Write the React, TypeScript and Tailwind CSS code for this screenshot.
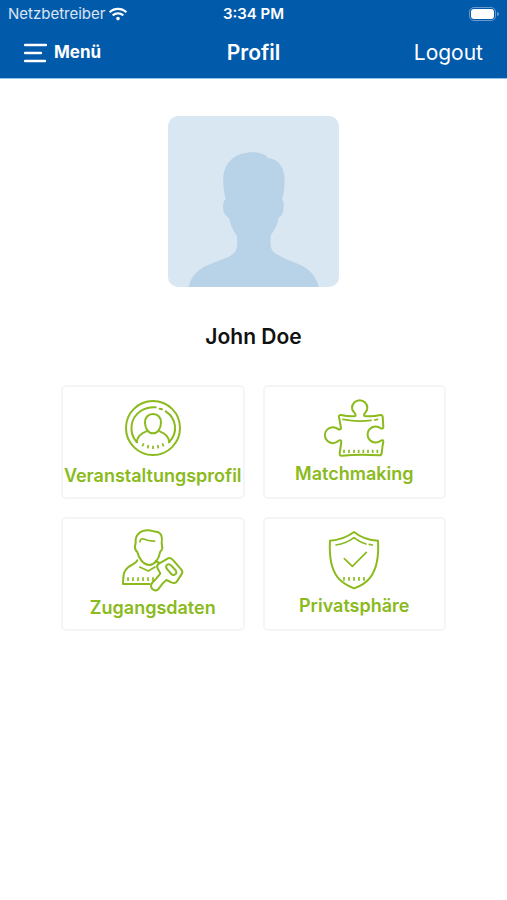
import { FaWifi } from "react-icons/fa";

const iconProps = {
    fill: "none",
    stroke: "currentColor",
    strokeWidth: 6,
    strokeLinecap: "round" as const,
    strokeLinejoin: "round" as const,
    "aria-hidden": true,
};

function EventProfileIcon() {
    return (
        <svg {...iconProps} viewBox="0 0 198 198" className="w-[66px] h-[66px]">
            <circle cx="99" cy="96" r="81" />
            <path d="M51 139C25 111 30 66 62 45C76 36 91 33 107 34M137 46C170 67 175 111 147 139" />
            <path d="M119 38l7 2" />
            <path d="M99 54c-15 0-25 11-24 27 1 17 10 31 24 31s23-14 24-31c1-16-9-27-24-27Z" />
            <path d="M50 138c2-16 12-26 29-32M148 138c-2-16-12-26-29-32" />
            <path strokeLinecap="butt" strokeWidth="5" d="M71 142l-4 9M85 147l-2 10M99 149v10M113 147l2 10M127 142l4 9" />
        </svg>
    );
}

function PuzzleIcon() {
    return (
        <svg {...iconProps} viewBox="0 0 198 192" className="w-[66px] h-16">
            <path d="M103 60C108 52 93 49 93 36a23 23 0 0 1 46 0C139 49 125 52 130 60C146 62 162 61 178 57Q184 56 185 62L187 92Q187 100 179 97A24 24 0 1 0 179 134Q187 130 187 137C184 150 183 162 182 172Q181 178 175 178Q116 174 62 179Q55 179 56 172L61 138Q61 130 53 134A24 24 0 1 1 51 99Q59 103 60 96L54 63Q53 56 60 57C75 60 88 62 103 60Z" />
            <path strokeWidth="5" d="M66 70c28 6 56 7 84 3M161 72l9-2" />
            <path strokeLinecap="butt" strokeWidth="5" d="M69 161v10M84 161v10M99 161v10M113 161v10M127 161v10M141 161v10M155 161v10M169 161v10" />
        </svg>
    );
}

function AccessIcon() {
    return (
        <svg {...iconProps} viewBox="0 6 198 198" className="w-[66px] h-[66px]">
            <path d="M47 51C44 27 60 13 84 13c12 0 17 4 24 4 16 1 20 16 17 34l2 15c0 6-5 8-7 13-3 20-16 37-32 38-18-1-32-20-36-39-6-5-8-10-7-18Z" />
            <path strokeWidth="5" d="M60 48c0-7 4-11 11-9 12 5 22 7 33 6" />
            <path d="M52 103c-2 7-9 10-17 14-15 7-25 21-25 38l-1 19h80M107 105l11 6" />
            <path strokeWidth="5" d="M59 123l26 12 20-12" />
            <path strokeLinecap="butt" strokeWidth="5" d="M24 154v11M39 154v11M54 154v11M69 154v11M84 154v11M99 154v11" />
            <path d="M117 113l27-16c6-3 12 1 16 6l24 28c5 6 4 10 0 15l-13 20c-4 6-10 6-17 3l-15-7c-9 7-16 15-23 26-6 9-19 5-22-4-4-9 3-15 10-21l17-20-9-18c-2-6 0-9 5-12Z" />
            <path d="M142 116c-6 4-4 9 0 14l12 14c5 5 12 3 15-2 1-4 0-7-3-10l-12-13c-4-4-8-5-12-3Z" />
        </svg>
    );
}

function ShieldIcon() {
    return (
        <svg {...iconProps} viewBox="0 6 198 192" className="w-[66px] h-16">
            <path d="M99 18c20 16 44 25 72 26 3 51-3 84-23 110-14 18-31 27-49 33-18-7-35-16-49-33C30 129 24 96 27 44 54 43 77 34 99 18Z" />
            <path strokeWidth="5" d="M45 57c21-3 38-10 54-22 12 9 23 16 36 19M145 55l9 2" />
            <path strokeWidth="5" d="M70 98l24 23 42-42" />
            <path strokeLinecap="butt" strokeWidth="5" d="M69 153v11M84 153v11M99 153v11M114 153v11M129 153v11" />
        </svg>
    );
}

const tiles = [
    { label: "Veranstaltungsprofil", Icon: EventProfileIcon },
    { label: "Matchmaking", Icon: PuzzleIcon },
    { label: "Zugangsdaten", Icon: AccessIcon },
    { label: "Privatsphäre", Icon: ShieldIcon },
];

function StatusBar() {
    return (
        <div className="grid grid-cols-3 items-center h-7 px-2 text-[15px]">
            <div className="flex items-center gap-1 text-white/85">
                <span>Netzbetreiber</span>
                <FaWifi className="size-[18px] text-white" />
            </div>
            <span className="text-center font-semibold">3:34 PM</span>
            <div className="flex items-center justify-end gap-px">
                <div className="w-[27px] h-[14px] rounded-[5px] border border-white/40 p-px">
                    <div className="h-full rounded-[3px] bg-white"></div>
                </div>
                <div className="w-[2px] h-1 rounded-r-full bg-white/40"></div>
            </div>
        </div>
    );
}

function Avatar() {
    return (
        <svg viewBox="43 35 513 513" role="img" aria-label="John Doe" className="w-[171px] h-[171px] rounded-[10px] bg-[#d9e7f2]">
            <path
                fill="#b8d2e7"
                d="M105 548c6-30 26-52 58-66 30-12 60-20 78-36 11-10 10-28 9-52-13-16-20-34-24-54-12-5-18-17-18-32 0-12 3-20 8-24-6-22-8-42-7-62 2-50 38-78 88-78 20 0 36 5 46 17 35 4 51 32 50 72-1 22-3 38-8 52 5 5 6 13 5 25-2 15-5 25-15 30-3 20-12 38-24 52-1 22-2 42 8 50 18 16 48 26 76 38 34 14 52 36 60 68Z"
            />
        </svg>
    );
}

export default function App() {
    return (
        <div className="min-h-screen bg-white font-['Inter',sans-serif]">
            <header className="bg-[#015aaa] border-b border-[#8fc3ea] text-white">
                <StatusBar />
                <nav className="grid grid-cols-3 items-center h-[50px] px-6">
                    <button type="button" className="flex items-center gap-[7px] text-[17px] font-bold">
                        <svg viewBox="0 0 23 20" className="w-[23px] h-5" fill="none" stroke="currentColor" strokeWidth="2.4" strokeLinecap="round" aria-hidden="true">
                            <path d="M1 2h21M1 10h16M1 18h20" />
                        </svg>
                        Menü
                    </button>
                    <h1 className="text-center text-[21px] leading-7 font-semibold">Profil</h1>
                    <button type="button" className="justify-self-end text-[21px] leading-7">Logout</button>
                </nav>
            </header>
            <main className="flex flex-col items-center pt-[37px]">
                <Avatar />
                <h2 className="mt-9 text-[21px] leading-7 font-semibold text-[#111111]">John Doe</h2>
                <div className="mt-[34px] w-full px-[61px] grid grid-cols-2 gap-[18px]">
                    {tiles.map(({ label, Icon }) => (
                        <button
                            key={label}
                            type="button"
                            className="flex flex-col items-center justify-start h-[114px] pt-[9px] rounded-[5px] border-2 border-[#f5f5f5] text-[#8aba1c]"
                        >
                            <Icon />
                            <span className="text-lg leading-7 font-semibold">{label}</span>
                        </button>
                    ))}
                </div>
            </main>
        </div>
    );
}
